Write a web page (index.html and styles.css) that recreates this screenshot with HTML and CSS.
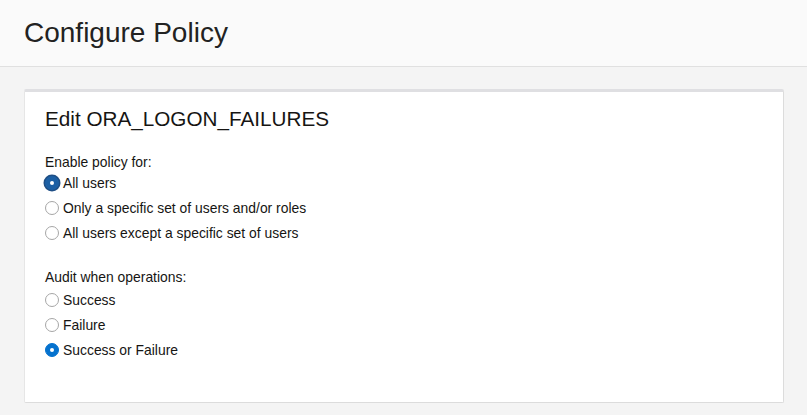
FILE: index.html
```html
<!DOCTYPE html>
<html>
<head>
<meta charset="utf-8">
<link rel="stylesheet" href="styles.css">
</head>
<body>
<header class="page-header">
  <h1 class="page-title">Configure Policy</h1>
</header>
<main class="content">
  <section class="card">
    <h2 class="card-title">Edit ORA_LOGON_FAILURES</h2>
    <div class="group">
      <div class="group-label">Enable policy for:</div>
      <label class="radio-row"><span class="radio checked focused"></span><span>All users</span></label>
      <label class="radio-row"><span class="radio"></span><span>Only a specific set of users and/or roles</span></label>
      <label class="radio-row"><span class="radio"></span><span>All users except a specific set of users</span></label>
    </div>
    <div class="group group-second">
      <div class="group-label">Audit when operations:</div>
      <label class="radio-row"><span class="radio"></span><span>Success</span></label>
      <label class="radio-row"><span class="radio"></span><span>Failure</span></label>
      <label class="radio-row"><span class="radio checked"></span><span>Success or Failure</span></label>
    </div>
  </section>
</main>
</body>
</html>
```
FILE: styles.css
```css
html, body {
  margin: 0;
  padding: 0;
}
body {
  background: #f4f4f4;
  font-family: "Liberation Sans", Arial, sans-serif;
  color: #161513;
  height: 415px;
  overflow: hidden;
}
.page-header {
  background: #fafafa;
  border-bottom: 1px solid #e0e0e0;
  height: 67px;
  box-sizing: border-box;
  padding: 0 24px;
  display: flex;
  align-items: center;
}
.page-title {
  margin: 0;
  font-weight: normal;
  font-size: 28px;
  color: #222;
}
.content {
  padding: 22px 23px 0 24px;
}
.card {
  background: #fff;
  border: 1px solid #dcdcdc;
  border-top: 3px solid #dfdfe2;
  border-left: 1px solid #e6e6e6;
  border-radius: 2px;
  height: 314px;
  box-sizing: border-box;
  padding: 15px 20px 0 20px;
}
.card-title {
  margin: 0;
  font-weight: normal;
  font-size: 20.7px;
  color: #161513;
  line-height: 24px;
}
.group {
  margin-top: 23px;
  font-size: 13.9px;
}
.group-second {
  margin-top: 24px;
}
.group-label {
  line-height: 16px;
}
.group-second .group-label {
  margin-bottom: 2px;
}
.radio-row {
  display: flex;
  align-items: center;
  height: 25px;
  gap: 4px;
  color: #161513;
}
.radio {
  width: 14px;
  height: 14px;
  box-sizing: border-box;
  border-radius: 50%;
  border: 1px solid #a6a6a6;
  background: #fff;
  flex: none;
  position: relative;
}
.radio.checked {
  background: #0572ce;
  border-color: #0572ce;
}
.radio.checked::after {
  content: "";
  position: absolute;
  left: 50%;
  top: 50%;
  width: 4px;
  height: 4px;
  margin: -2px 0 0 -2px;
  border-radius: 50%;
  background: #fff;
}
.radio.focused {
  background: #1c5fa4;
  border-color: #1c5fa4;
  box-shadow: 0 0 0 1.5px #1f4f86;
}
```
